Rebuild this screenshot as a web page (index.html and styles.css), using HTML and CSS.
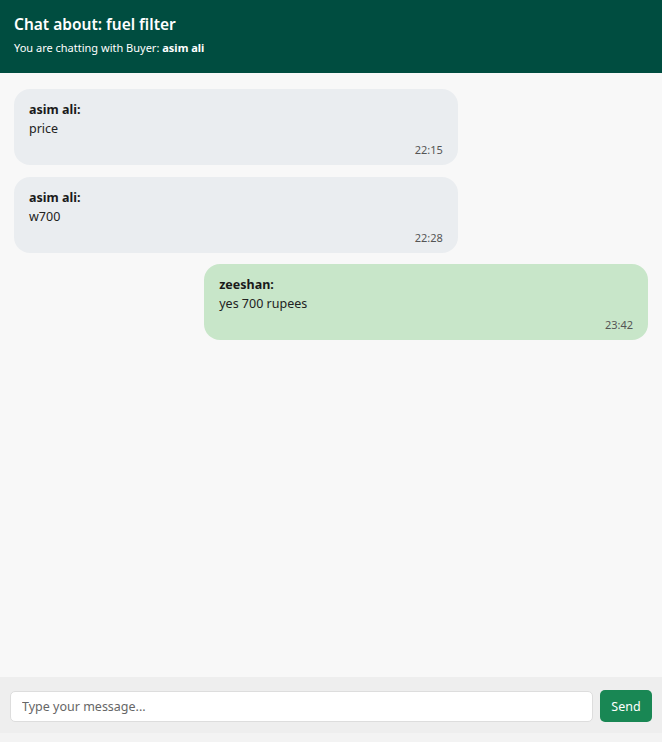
FILE: index.html
```html
<!DOCTYPE html>
<html>
<head>
<meta charset="utf-8">
<link rel="stylesheet" href="styles.css">
</head>
<body>
<div class="chat">
  <header class="chat-header">
    <h1 class="chat-title">Chat about: fuel filter</h1>
    <p class="chat-sub">You are chatting with Buyer: <strong>asim ali</strong></p>
  </header>
  <main class="messages">
    <div class="msg msg-in">
      <div class="msg-name">asim ali:</div>
      <div class="msg-text">price</div>
      <div class="msg-time">22:15</div>
    </div>
    <div class="msg msg-in">
      <div class="msg-name">asim ali:</div>
      <div class="msg-text">w700</div>
      <div class="msg-time">22:28</div>
    </div>
    <div class="msg msg-out">
      <div class="msg-name">zeeshan:</div>
      <div class="msg-text">yes 700 rupees</div>
      <div class="msg-time">23:42</div>
    </div>
  </main>
  <footer class="composer">
    <input class="composer-input" type="text" placeholder="Type your message...">
    <button class="composer-send">Send</button>
  </footer>
  <div class="bottom-strip"></div>
</div>
</body>
</html>
```
FILE: styles.css
```css
* { box-sizing: border-box; }
html, body { margin: 0; padding: 0; height: 100%; }
body {
  font-family: "Noto Sans", "Open Sans", sans-serif;
  background: #f3f3f3;
  color: #222;
}
.chat {
  height: 742px;
  display: flex;
  flex-direction: column;
}
.chat-header {
  background: #004d40;
  color: #fff;
  height: 73px;
  padding: 12px 14px 0;
}
.chat-title {
  margin: 0;
  font-size: 15.5px;
  font-weight: 600;
  line-height: 24px;
}
.chat-sub {
  margin: 4px 0 0;
  font-size: 11px;
  line-height: 16px;
}
.chat-sub strong { font-weight: 700; }
.messages {
  flex: 1;
  background: #f8f8f8;
  padding: 16px 14px;
  display: flex;
  flex-direction: column;
  gap: 11.5px;
}
.msg {
  width: 70%;
  border-radius: 16px;
  padding: 11px 15px 8px;
  font-size: 12.5px;
  line-height: 19px;
}
.msg-in { background: #eaedf0; align-self: flex-start; }
.msg-out { background: #c8e6c9; align-self: flex-end; }
.msg-name { font-weight: 700; color: #1a1a1a; }
.msg-text { color: #222; }
.msg-time {
  text-align: right;
  font-size: 11px;
  color: #555;
  line-height: 15px;
  margin-top: 4px;
}
.composer {
  background: #eeeeee;
  padding: 13px 10px 11px;
  display: flex;
  gap: 7px;
  align-items: center;
}
.composer-input {
  flex: 1;
  height: 31px;
  border: 1px solid #dddddd;
  border-radius: 5px;
  background: #fff;
  padding: 0 11px;
  font-family: inherit;
  font-size: 12.5px;
  color: #222;
  outline: none;
}
.composer-input::placeholder { color: #666; }
.composer-send {
  width: 52px;
  height: 32px;
  border: none;
  border-radius: 5px;
  background: #198754;
  color: #fff;
  font-family: inherit;
  font-size: 12.5px;
  cursor: pointer;
}
.bottom-strip { height: 9px; background: #f3f3f3; }
```
